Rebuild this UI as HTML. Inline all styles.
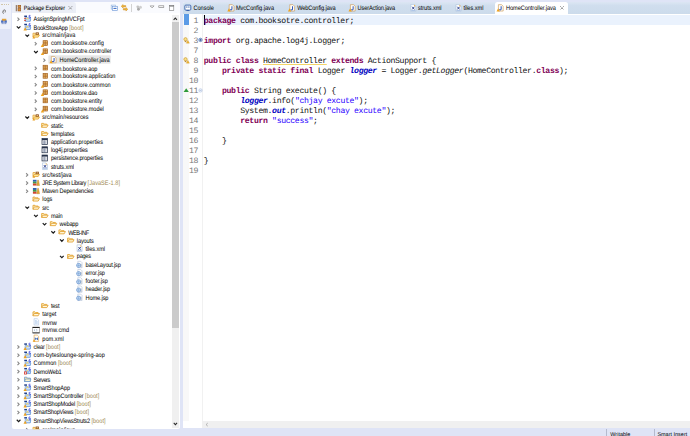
<!DOCTYPE html>
<html><head><meta charset="utf-8"><title>Eclipse</title>
<style>
html,body{margin:0;padding:0;}
body{text-rendering:geometricPrecision;width:690px;height:436px;overflow:hidden;background:#dfe4f6;position:relative;font-family:"Liberation Sans",sans-serif;font-size:5.45px;color:#1a1a1a;}
.abs{position:absolute;}
#strip{position:absolute;left:0;top:2px;width:10.8px;height:26.5px;background:#eef1fa;border-radius:0 1.5px 1.5px 0;}
#pe{position:absolute;left:12.3px;top:1.8px;width:168.2px;height:427.4px;background:#fff;border-radius:2px;overflow:hidden;}
#ed{position:absolute;left:182.7px;top:1.8px;width:520px;height:426.6px;background:#fff;border-radius:2px 0 0 0;overflow:hidden;}
#root{position:absolute;left:0;top:0;width:690px;height:436px;overflow:hidden;}
.row{position:absolute;left:0;width:172px;height:8.2px;line-height:8.2px;white-space:nowrap;}
.ic{position:absolute;width:7.3px;height:7.3px;top:0.45px;}
.ar{position:absolute;width:4.6px;height:4.6px;top:1.9px;margin-left:0.2px}
.tx{position:absolute;top:0;transform:scaleY(1.15);transform-origin:0 58%;letter-spacing:0.03px;color:#000;-webkit-text-stroke:0.02px #000;}
.selbox{position:absolute;top:0.2px;height:7.6px;width:61.2px;background:#e6e6e6;box-shadow:0 0 0 0.4px #d4d4d4;}
.sf{margin-left:1.5px;color:#a08a52;-webkit-text-stroke:0;}
.tab{position:absolute;top:4.9px;transform:scaleY(1.15);transform-origin:0 58%;line-height:8px;color:#000;white-space:nowrap;-webkit-text-stroke:0.02px #000;letter-spacing:-0.05px}
.ln{position:absolute;left:182.6px;width:15.5px;text-align:right;font-family:"Liberation Mono",monospace;font-size:8.2px;letter-spacing:-0.372px;line-height:10px;height:10px;color:#787878;}
.cd{position:absolute;left:203.8px;margin:0;font-family:"Liberation Mono",monospace;font-size:8.2px;letter-spacing:-0.361px;line-height:10px;height:10px;color:#111;white-space:pre;}
.cd b{color:#7f0055;font-weight:bold;}
.cd u{color:#2a00ff;text-decoration:none;}
.cd s{text-decoration:underline solid #f3d568;text-decoration-thickness:0.7px;text-underline-offset:0.9px;}
.cd i{font-style:italic;}
.cd i.sf2{color:#0000c0;font-weight:bold;}
</style></head><body>
<div id="root">
<div id="strip"></div>
<div id="pe"></div>
<div id="ed"></div>
<div class="abs" style="left:183.2px;top:14px;width:5.6px;height:406.8px;background:#f8f8f8;"></div>
<div class="abs" style="left:202.3px;top:14px;width:0.5px;height:406.8px;background:#f1f1f1;"></div>
<!-- editor tab bar -->
<div class="abs" style="left:182.7px;top:1.8px;width:508px;height:11.9px;background:linear-gradient(#dce6f3 0%,#d0deee 30%,#ccdbeb 100%);border-radius:2px 0 0 0;"></div>
<div class="abs" style="left:494.6px;top:2.2px;width:73.6px;height:11.6px;background:#fff;border-radius:2.5px 2.5px 0 0;"></div>

<span class="tab" id="t1" style="left:193.50px;letter-spacing:-0.033px;font-size:5.6px">Console</span>

<span class="tab" id="t3" style="left:235.90px;letter-spacing:-0.011px;font-size:5.6px">MvcConfig.java</span>

<span class="tab" id="t5" style="left:297.20px;letter-spacing:-0.078px;font-size:5.6px">WebConfig.java</span>

<span class="tab" id="t7" style="left:357.60px;letter-spacing:-0.119px;font-size:5.6px">UserAction.java</span>

<span class="tab" id="t9" style="left:418.00px;letter-spacing:-0.044px;font-size:5.6px">struts.xml</span>

<span class="tab" id="t11" style="left:463.40px;letter-spacing:-0.023px;font-size:5.6px">tiles.xml</span>

<span class="tab" id="t13" style="left:506.00px;letter-spacing:-0.047px;font-size:5.6px">HomeController.java</span>
<!-- line highlight -->
<div class="abs" style="left:203.3px;top:14.7px;width:487px;height:9.9px;background:#eaf2fd;"></div>
<div class="abs" style="left:183.9px;top:14.2px;width:5px;height:10.6px;background:#5c9be6;"></div>
<div class="abs" style="left:204.1px;top:14.6px;width:0.9px;height:10px;background:#000;"></div>
<!-- PE header -->
<div class="abs" style="left:12.3px;top:1.8px;width:168.2px;height:11.5px;background:#fafbfe;border-radius:2px 2px 0 0;"></div>
<div class="abs" style="left:12.3px;top:1.8px;width:63.6px;height:11.6px;background:#ebeef6;border-radius:2px 3px 0 0;"></div>

<span class="tab" style="left:23.7px;letter-spacing:-0.1px">Package Explorer</span>
<!-- PE scrollbar -->
<div class="abs" style="left:172.05px;top:14.9px;width:6.65px;height:413px;background:#f0f0f0;"></div>
<div class="abs" style="left:172.05px;top:22.1px;width:6.65px;height:305.6px;background:#cbcbcb;"></div>
<!-- bottom scrollbar -->
<div class="abs" style="left:202.4px;top:420.8px;width:488px;height:7.6px;background:#f0f0f0;"></div>
<!-- status -->
<div class="abs" style="left:606.4px;top:428.6px;width:0.7px;height:8px;background:#b4bace;"></div>
<div class="abs" style="left:654.3px;top:428.6px;width:0.7px;height:8px;background:#b4bace;"></div>
<span class="abs" style="left:610.3px;top:431.9px;line-height:7px;letter-spacing:0.02px;color:#000">Writable</span>
<span class="abs" style="left:657.4px;top:431.9px;line-height:7px;letter-spacing:0.02px;color:#000">Smart Insert</span>

<!-- ruler annotations -->





<!-- PE toolbar -->


<div class="abs" style="left:130.8px;top:4.2px;width:0.8px;height:7.8px;background:#d2d2d2"></div>




<!-- PE tab close-ish glyph -->


<!-- scroll arrows -->



<!-- left strip -->
<div class="abs" style="left:1px;top:4.3px;width:7.6px;height:0;border-top:0.8px dotted #d2c6aa"></div>


<div class="abs" style="left:0;top:13.5px;width:172px;height:415.7px;overflow:hidden"><div class="abs" style="left:0;top:-13.5px;width:172px;height:436px">
<div class="row" style="top:14.60px"><span class="tx" style="left:33.60px;top:1.41px;font-size:5.6px"><span class="m" id="r0" style="letter-spacing:-0.155px">AssignSpringMVCFpt</span></span></div>
<div class="row" style="top:22.80px"><span class="tx" style="left:33.60px;top:1.91px;font-size:5.6px"><span class="m" id="r1" style="letter-spacing:-0.157px">BookStoreApp</span><span class="sf">[boot]</span></span></div>
<div class="row" style="top:30.99px"><span class="tx" style="left:42.25px;top:1.41px;font-size:5.6px"><span class="m" id="r2" style="letter-spacing:0.015px">src/main/java</span></span></div>
<div class="row" style="top:39.19px"><span class="tx" style="left:50.90px;top:0.91px;font-size:5.6px"><span class="m" id="r3" style="letter-spacing:-0.014px">com.booksotre.config</span></span></div>
<div class="row" style="top:47.38px"><span class="tx" style="left:50.90px;top:0.91px;font-size:5.6px"><span class="m" id="r4" style="letter-spacing:-0.023px">com.booksotre.controller</span></span></div>
<div class="row" style="top:55.58px"><div class="selbox" style="left:48.65px"></div><span class="tx" style="left:59.55px;top:1.41px;font-size:5.6px"><span class="m" id="r5" style="letter-spacing:-0.034px">HomeController.java</span></span></div>
<div class="row" style="top:63.77px"><span class="tx" style="left:50.90px;top:1.91px;font-size:5.6px"><span class="m" id="r6" style="letter-spacing:-0.063px">com.bookstore.aop</span></span></div>
<div class="row" style="top:71.97px"><span class="tx" style="left:50.90px;top:1.41px;font-size:5.6px"><span class="m" id="r7" style="letter-spacing:-0.020px">com.bookstore.application</span></span></div>
<div class="row" style="top:80.16px"><span class="tx" style="left:50.90px;top:1.41px;font-size:5.6px"><span class="m" id="r8" style="letter-spacing:0.005px">com.bookstore.common</span></span></div>
<div class="row" style="top:88.36px"><span class="tx" style="left:50.90px;top:1.41px;font-size:5.6px"><span class="m" id="r9" style="letter-spacing:-0.063px">com.bookstore.dao</span></span></div>
<div class="row" style="top:96.55px"><span class="tx" style="left:50.90px;top:1.41px;font-size:5.6px"><span class="m" id="r10" style="letter-spacing:-0.026px">com.bookstore.entity</span></span></div>
<div class="row" style="top:104.75px"><span class="tx" style="left:50.90px;top:1.41px;font-size:5.6px"><span class="m" id="r11" style="letter-spacing:-0.031px">com.bookstore.model</span></span></div>
<div class="row" style="top:112.94px"><span class="tx" style="left:42.25px;top:1.41px;font-size:5.6px"><span class="m" id="r12" style="letter-spacing:-0.061px">src/main/resources</span></span></div>
<div class="row" style="top:121.14px"><span class="tx" style="left:50.90px;top:1.41px;font-size:5.6px"><span class="m" id="r13" style="letter-spacing:-0.127px">static</span></span></div>
<div class="row" style="top:129.33px"><span class="tx" style="left:50.90px;top:1.41px;font-size:5.6px"><span class="m" id="r14" style="letter-spacing:-0.074px">templates</span></span></div>
<div class="row" style="top:137.53px"><span class="tx" style="left:50.90px;top:1.41px;font-size:5.6px"><span class="m" id="r15" style="letter-spacing:-0.054px">application.properties</span></span></div>
<div class="row" style="top:145.72px"><span class="tx" style="left:50.90px;top:1.41px;font-size:5.6px"><span class="m" id="r16" style="letter-spacing:-0.084px">log4j.properties</span></span></div>
<div class="row" style="top:153.92px"><span class="tx" style="left:50.90px;top:1.41px;font-size:5.6px"><span class="m" id="r17" style="letter-spacing:-0.139px">persistence.properties</span></span></div>
<div class="row" style="top:162.11px"><span class="tx" style="left:50.90px;top:1.41px;font-size:5.6px"><span class="m" id="r18" style="letter-spacing:-0.094px">struts.xml</span></span></div>
<div class="row" style="top:170.31px"><span class="tx" style="left:42.25px;top:1.41px;font-size:5.6px"><span class="m" id="r19" style="letter-spacing:-0.038px">src/test/java</span></span></div>
<div class="row" style="top:178.50px"><span class="tx" style="left:42.25px;top:1.41px;font-size:5.6px"><span class="m" id="r20" style="letter-spacing:-0.310px">JRE System Library</span><span class="sf">[JavaSE-1.8]</span></span></div>
<div class="row" style="top:186.70px"><span class="tx" style="left:42.25px;top:1.41px;font-size:5.6px"><span class="m" id="r21" style="letter-spacing:-0.170px">Maven Dependencies</span></span></div>
<div class="row" style="top:194.89px"><span class="tx" style="left:42.25px;top:1.41px;font-size:5.6px"><span class="m" id="r22" style="letter-spacing:-0.079px">logs</span></span></div>
<div class="row" style="top:203.09px"><span class="tx" style="left:42.25px;top:1.91px;font-size:5.6px"><span class="m" id="r23" style="letter-spacing:-0.340px">src</span></span></div>
<div class="row" style="top:211.28px"><span class="tx" style="left:50.90px;top:1.41px;font-size:5.6px"><span class="m" id="r24" style="letter-spacing:-0.106px">main</span></span></div>
<div class="row" style="top:219.48px"><span class="tx" style="left:59.55px;top:1.41px;font-size:5.6px"><span class="m" id="r25" style="letter-spacing:-0.143px">webapp</span></span></div>
<div class="row" style="top:227.67px"><span class="tx" style="left:68.20px;top:1.91px;font-size:5.6px"><span class="m" id="r26" style="letter-spacing:-0.446px">WEB-INF</span></span></div>
<div class="row" style="top:235.87px"><span class="tx" style="left:76.85px;top:1.91px;font-size:5.6px"><span class="m" id="r27" style="letter-spacing:-0.141px">layouts</span></span></div>
<div class="row" style="top:244.06px"><span class="tx" style="left:85.50px;top:1.91px;font-size:5.6px"><span class="m" id="r28" style="letter-spacing:-0.089px">tiles.xml</span></span></div>
<div class="row" style="top:252.26px"><span class="tx" style="left:76.85px;top:0.91px;font-size:5.6px"><span class="m" id="r29" style="letter-spacing:-0.280px">pages</span></span></div>
<div class="row" style="top:260.45px"><span class="tx" style="left:85.50px;top:1.41px;font-size:5.6px"><span class="m" id="r30" style="letter-spacing:-0.181px">baseLayout.jsp</span></span></div>
<div class="row" style="top:268.65px"><span class="tx" style="left:85.50px;top:1.41px;font-size:5.6px"><span class="m" id="r31" style="letter-spacing:-0.091px">error.jsp</span></span></div>
<div class="row" style="top:276.84px"><span class="tx" style="left:85.50px;top:1.41px;font-size:5.6px"><span class="m" id="r32" style="letter-spacing:-0.040px">footer.jsp</span></span></div>
<div class="row" style="top:285.04px"><span class="tx" style="left:85.50px;top:1.41px;font-size:5.6px"><span class="m" id="r33" style="letter-spacing:-0.143px">header.jsp</span></span></div>
<div class="row" style="top:293.23px"><span class="tx" style="left:85.50px;top:1.41px;font-size:5.6px"><span class="m" id="r34" style="letter-spacing:-0.093px">Home.jsp</span></span></div>
<div class="row" style="top:301.43px"><span class="tx" style="left:50.90px;top:1.41px;font-size:5.6px"><span class="m" id="r35" style="letter-spacing:-0.133px">test</span></span></div>
<div class="row" style="top:309.62px"><span class="tx" style="left:42.25px;top:1.41px;font-size:5.6px"><span class="m" id="r36" style="letter-spacing:-0.060px">target</span></span></div>
<div class="row" style="top:317.82px"><span class="tx" style="left:42.25px;top:1.91px;font-size:5.6px"><span class="m" id="r37" style="letter-spacing:-0.015px">mvnw</span></span></div>
<div class="row" style="top:326.01px"><span class="tx" style="left:42.25px;top:1.41px;font-size:5.6px"><span class="m" id="r38" style="letter-spacing:0.079px">mvnw.cmd</span></span></div>
<div class="row" style="top:334.21px"><span class="tx" style="left:42.25px;top:1.41px;font-size:5.6px"><span class="m" id="r39" style="letter-spacing:0.044px">pom.xml</span></span></div>
<div class="row" style="top:342.40px"><span class="tx" style="left:33.60px;top:1.41px;font-size:5.6px"><span class="m" id="r40" style="letter-spacing:-0.225px">clear</span><span class="sf">[boot]</span></span></div>
<div class="row" style="top:350.60px"><span class="tx" style="left:33.60px;top:1.41px;font-size:5.6px"><span class="m" id="r41" style="letter-spacing:0.011px">com-byteslounge-spring-aop</span></span></div>
<div class="row" style="top:358.79px"><span class="tx" style="left:33.60px;top:1.41px;font-size:5.6px"><span class="m" id="r42" style="letter-spacing:0.033px">Common</span><span class="sf">[boot]</span></span></div>
<div class="row" style="top:366.99px"><span class="tx" style="left:33.60px;top:1.91px;font-size:5.6px"><span class="m" id="r43" style="letter-spacing:-0.192px">DemoWeb1</span></span></div>
<div class="row" style="top:375.18px"><span class="tx" style="left:33.60px;top:1.41px;font-size:5.6px"><span class="m" id="r44" style="letter-spacing:-0.426px">Servers</span></span></div>
<div class="row" style="top:383.38px"><span class="tx" style="left:33.60px;top:1.41px;font-size:5.6px"><span class="m" id="r45" style="letter-spacing:-0.137px">SmartShopApp</span></span></div>
<div class="row" style="top:391.57px"><span class="tx" style="left:33.60px;top:1.41px;font-size:5.6px"><span class="m" id="r46" style="letter-spacing:-0.118px">SmartShopController</span><span class="sf">[boot]</span></span></div>
<div class="row" style="top:399.77px"><span class="tx" style="left:33.60px;top:1.41px;font-size:5.6px"><span class="m" id="r47" style="letter-spacing:-0.116px">SmartShopModel</span><span class="sf">[boot]</span></span></div>
<div class="row" style="top:407.96px"><span class="tx" style="left:33.60px;top:1.41px;font-size:5.6px"><span class="m" id="r48" style="letter-spacing:-0.222px">SmartShopViews</span><span class="sf">[boot]</span></span></div>
<div class="row" style="top:416.16px"><span class="tx" style="left:33.60px;top:1.41px;font-size:5.6px"><span class="m" id="r49" style="letter-spacing:-0.202px">SmartShopViewsStruts2</span><span class="sf">[boot]</span></span></div>
<div class="row" style="top:425.15px"><span class="tx" style="left:42.25px;top:1.41px;font-size:5.6px"><span class="m" id="r50" style="letter-spacing:0.015px">src/main/java</span></span></div>
</div></div>
<div class="ln" style="top:16.90px">1</div><pre class="cd" style="top:16.90px"><b>package</b> com.booksotre.controller;</pre>
<div class="ln" style="top:26.90px">2</div><pre class="cd" style="top:26.90px"></pre>
<div class="ln" style="top:36.90px">3</div><pre class="cd" style="top:36.90px"><b>import</b> org.apache.log4j.Logger;</pre>
<div class="ln" style="top:46.90px">7</div><pre class="cd" style="top:46.90px"></pre>
<div class="ln" style="top:56.90px">8</div><pre class="cd" style="top:56.90px"><b>public</b> <b>class</b> <s>HomeController</s> <b>extends</b> ActionSupport {</pre>
<div class="ln" style="top:66.90px">9</div><pre class="cd" style="top:66.90px">    <b>private</b> <b>static</b> <b>final</b> Logger <i class="sf2">logger</i> = Logger.<i>getLogger</i>(HomeController.<b>class</b>);</pre>
<div class="ln" style="top:76.90px">10</div><pre class="cd" style="top:76.90px"></pre>
<div class="ln" style="top:86.90px">11</div><pre class="cd" style="top:86.90px">    <b>public</b> String execute() {</pre>
<div class="ln" style="top:96.90px">12</div><pre class="cd" style="top:96.90px">        <i class="sf2">logger</i>.info(<u>"chjay excute"</u>);</pre>
<div class="ln" style="top:106.90px">13</div><pre class="cd" style="top:106.90px">        System.<i class="sf2">out</i>.println(<u>"chay excute"</u>);</pre>
<div class="ln" style="top:116.90px">14</div><pre class="cd" style="top:116.90px">        <b>return</b> <u>"success"</u>;</pre>
<div class="ln" style="top:126.90px">15</div><pre class="cd" style="top:126.90px"></pre>
<div class="ln" style="top:136.90px">16</div><pre class="cd" style="top:136.90px">    }</pre>
<div class="ln" style="top:146.90px">17</div><pre class="cd" style="top:146.90px"></pre>
<div class="ln" style="top:156.90px">18</div><pre class="cd" style="top:156.90px">}</pre>
<div class="ln" style="top:166.90px">19</div><pre class="cd" style="top:166.90px"></pre>
<svg style="position:absolute;left:0;top:0;width:690px;height:436px" viewBox="0 0 690 436" width="690" height="436"><defs><clipPath id="tc"><rect x="0" y="0" width="180" height="429.2"/></clipPath></defs>
<g transform="translate(184.200 4.200) scale(0.45625 0.45625)"><rect x="1.5" y="2" width="13" height="11" rx="2" fill="#ffffff" stroke="#2f5aa8" stroke-width="2"/><rect x="4.5" y="5" width="2.5" height="2.5" fill="#2f5aa8"/><rect x="9" y="5" width="2.5" height="2.5" fill="#2f5aa8"/><rect x="5" y="13" width="6" height="2" fill="#2f5aa8"/></g>
<g transform="translate(227.600 4.200) scale(0.45625 0.45625)"><path d="M3.5 1 H10.5 L14 4.5 V15 H3.5 Z" fill="#fffdf8" stroke="#c9924a" stroke-width="1.3"/><path d="M9.5 4.5 V10.5 Q9.5 12.5 7.5 12.5 Q6 12.5 6 11" stroke="#2f55b8" stroke-width="2.2" fill="none"/><path d="M-0.6 16 L3 9 L6.6 16 Z" fill="#eea320"/></g>
<g transform="translate(288.200 4.200) scale(0.45625 0.45625)"><path d="M3.5 1 H10.5 L14 4.5 V15 H3.5 Z" fill="#fffdf8" stroke="#c9924a" stroke-width="1.3"/><path d="M9.5 4.5 V10.5 Q9.5 12.5 7.5 12.5 Q6 12.5 6 11" stroke="#2f55b8" stroke-width="2.2" fill="none"/><path d="M-0.6 16 L3 9 L6.6 16 Z" fill="#eea320"/></g>
<g transform="translate(348.800 4.200) scale(0.45625 0.45625)"><path d="M3.5 1 H10.5 L14 4.5 V15 H3.5 Z" fill="#fffdf8" stroke="#c9924a" stroke-width="1.3"/><path d="M9.5 4.5 V10.5 Q9.5 12.5 7.5 12.5 Q6 12.5 6 11" stroke="#2f55b8" stroke-width="2.2" fill="none"/><path d="M-0.6 16 L3 9 L6.6 16 Z" fill="#eea320"/></g>
<g transform="translate(409.400 4.200) scale(0.45625 0.45625)"><path d="M3 0.8 H10.5 L14 4.2 V15.4 H3 Z" fill="#fdfefe" stroke="#a9bedc" stroke-width="1.3"/><path d="M10.2 0.8 L14 4.4 H10.2 Z" fill="#f0b24a"/><path d="M6 5.6 L11 11.4 M11 5.6 L6 11.4" stroke="#2b3f8e" stroke-width="2.1"/><rect x="4" y="12.6" width="9" height="1.8" fill="#9db8e2"/></g>
<g transform="translate(454.600 4.200) scale(0.45625 0.45625)"><path d="M3 0.8 H10.5 L14 4.2 V15.4 H3 Z" fill="#fdfefe" stroke="#a9bedc" stroke-width="1.3"/><path d="M10.2 0.8 L14 4.4 H10.2 Z" fill="#f0b24a"/><path d="M6 5.6 L11 11.4 M11 5.6 L6 11.4" stroke="#2b3f8e" stroke-width="2.1"/><rect x="4" y="12.6" width="9" height="1.8" fill="#9db8e2"/></g>
<g transform="translate(496.800 4.200) scale(0.45625 0.45625)"><path d="M3.5 1 H10.5 L14 4.5 V15 H3.5 Z" fill="#fffdf8" stroke="#c9924a" stroke-width="1.3"/><path d="M9.5 4.5 V10.5 Q9.5 12.5 7.5 12.5 Q6 12.5 6 11" stroke="#2f55b8" stroke-width="2.2" fill="none"/><path d="M-0.6 16 L3 9 L6.6 16 Z" fill="#eea320"/></g>
<g transform="translate(15.800 4.900) scale(0.50000 0.50000)"><path d="M1 0.3 V12.7" stroke="#5a3414" stroke-width="1.5"/><rect x="4.4" y="0.9" width="5.4" height="4.6" fill="#d8903c" stroke="#96531a" stroke-width="1.2"/><rect x="4.4" y="7.5" width="5.4" height="4.6" fill="#d8903c" stroke="#96531a" stroke-width="1.2"/></g>
<g transform="translate(183.200 37.200) scale(0.51667 0.51667)"><circle cx="4.5" cy="4" r="3.2" fill="#f8e08a" stroke="#c9952a" stroke-width="1.2"/><rect x="3" y="7" width="3" height="2.5" fill="#b98a3a"/><path d="M6 11.5 L9 6 L12 11.5 Z" fill="#f2b632" stroke="#c58a1c" stroke-width="0.6"/></g>
<g transform="translate(183.200 57.200) scale(0.51667 0.51667)"><circle cx="4.5" cy="4" r="3.2" fill="#f8e08a" stroke="#c9952a" stroke-width="1.2"/><rect x="3" y="7" width="3" height="2.5" fill="#b98a3a"/><path d="M6 11.5 L9 6 L12 11.5 Z" fill="#f2b632" stroke="#c58a1c" stroke-width="0.6"/></g>
<g transform="translate(183.600 88.000) scale(0.52000 0.50000)"><path d="M0 8 L5 0.5 L10 8 Z" fill="#2f9a3a"/></g>
<g transform="translate(198.400 37.800) scale(0.42000 0.42000)"><circle cx="5" cy="5" r="4" fill="#e6eefc" stroke="#3a5fa8" stroke-width="1.6"/><path d="M2.5 5 H7.5 M5 2.5 V7.5" stroke="#2a478a" stroke-width="1.6"/></g>
<g transform="translate(198.400 88.300) scale(0.42000 0.42000)"><circle cx="5" cy="5" r="4" fill="#f4f8ff" stroke="#a9bcdc" stroke-width="1.4"/><path d="M2.8 5 H7.2" stroke="#8aa2cc" stroke-width="1.4"/></g>
<g transform="translate(110.800 4.700) scale(0.49333 0.49600)"><rect x="0.8" y="0.8" width="9" height="8" fill="#fff" stroke="#8fb0de" stroke-width="1.3"/><rect x="3.2" y="3.2" width="10.6" height="8.4" fill="#fff" stroke="#6f9ad8" stroke-width="1.3"/><path d="M5.4 7.4 H11.6" stroke="#2a5fc0" stroke-width="2"/></g>
<g transform="translate(120.800 4.000) scale(0.49333 0.50667)"><path d="M0.8 4.4 L4.6 1 V3 H10 V5.8 H4.6 V7.8 Z" fill="#f0b840" stroke="#cc8a1c" stroke-width="0.9"/><path d="M14.2 10.4 L10.4 7 V9 H5 V11.8 H10.4 V13.8 Z" fill="#f0b840" stroke="#cc8a1c" stroke-width="0.9"/></g>
<g transform="translate(135.800 5.000) scale(0.49231 0.50000)"><circle cx="4" cy="3.6" r="2.8" fill="#c4c4c4"/><circle cx="9.4" cy="4.6" r="3" fill="#cfcfcf"/><circle cx="5.4" cy="8.6" r="2.9" fill="#a8a8a8"/></g>
<g transform="translate(149.600 5.400) scale(0.50000 0.50000)"><path d="M1 1 H9 L5 5 Z" fill="#fff" stroke="#7a7a7a" stroke-width="1.2"/></g>
<g transform="translate(158.400 5.400) scale(0.48333 0.52000)"><rect x="0.8" y="0.8" width="10.4" height="3.4" fill="#fff" stroke="#7a7a7a" stroke-width="1.2"/></g>
<g transform="translate(169.200 5.200) scale(0.50000 0.50909)"><rect x="0.8" y="0.8" width="8.4" height="9.4" fill="#fff" stroke="#707070" stroke-width="1.1"/><rect x="0.8" y="0.8" width="8.4" height="1.8" fill="#707070"/></g>
<g transform="translate(67.600 5.200) scale(0.56000 0.56000)"><path d="M2 2 L8 8 M8 2 L2 8" stroke="#6a6a6a" stroke-width="1.5" stroke-dasharray="2.4 1.4"/></g>
<g transform="translate(559.200 5.200) scale(0.56000 0.56000)"><path d="M2 2 L8 8 M8 2 L2 8" stroke="#6a6a6a" stroke-width="1.5" stroke-dasharray="2.4 1.4"/></g>
<g transform="translate(173.100 17.100) scale(0.44000 0.45714)"><path d="M1.2 6 L5 2 L8.8 6" fill="none" stroke="#2a2a2a" stroke-width="2.3"/></g>
<g transform="translate(173.200 422.400) scale(0.44000 0.45714)"><path d="M1.2 1 L5 5 L8.8 1" fill="none" stroke="#2a2a2a" stroke-width="2.3"/></g>
<g transform="translate(205.200 422.400) scale(0.42857 0.44000)"><path d="M6 1.5 L2 5 L6 8.5" fill="none" stroke="#9a9a9a" stroke-width="1.6"/></g>
<g transform="translate(1.600 8.900) scale(0.52000 0.52000)"><path d="M4.2 8.8 Q2 8.6 2.2 6.4 L3 3.6 Q3.8 1.4 5.8 1.8 Q7.8 2.4 7.4 4.4 L6.6 7 M5.2 3.4 Q4 3.6 3.8 5" fill="none" stroke="#7c7c7c" stroke-width="1.9"/></g>
<g transform="translate(0.800 18.200) scale(0.55000 0.56364)"><rect x="2" y="1" width="8" height="4" fill="#e2a23a"/><rect x="0.5" y="4" width="4" height="4" fill="#4a6fc0"/><rect x="7" y="4" width="4" height="4" fill="#4a6fc0"/><path d="M2.5 8 V10.5 M5.8 5 V10.5 M9 8 V10.5" stroke="#3a5aa8" stroke-width="1.3"/></g>
<g transform="translate(15.900 16.800) scale(0.46000 0.46000)"><path d="M3.4 1.6 L7 5.2 L3.4 8.8" fill="none" stroke="#888888" stroke-width="2.4"/></g>
<g transform="translate(23.800 15.000) scale(0.45625 0.45625)"><rect x="1" y="1.2" width="6" height="3.2" fill="#1f3f8a"/><path d="M3 13.5 V6 H8.5 L10 4.5 H14.5 V13.5 Z" fill="#f2f7fe" stroke="#4f86cf" stroke-width="1.4" stroke-linejoin="round"/><path d="M3 13.5 L5.5 8.5 H15.5 L13.5 13.5 Z" fill="#dcebfb" stroke="#4f86cf" stroke-width="1.2" stroke-linejoin="round"/><rect x="6" y="6.2" width="4" height="3" fill="#f6d96a"/><path d="M14.5 1 Q11 0 11.2 2.2 Q11.4 3.6 13 3.8 Q14.8 4.2 14.4 5.8 Q13.8 7 11 6.4" fill="none" stroke="#3a3fe0" stroke-width="1.7"/><rect x="1" y="6" width="3.4" height="2.6" fill="#d9412b"/><rect x="1" y="10.6" width="3.4" height="2.6" fill="#d9412b"/></g>
<g transform="translate(16.300 25.000) scale(0.46000 0.46000)"><path d="M1 3 L5 7 L9 3" fill="none" stroke="#1c1c1c" stroke-width="2.6"/></g>
<g transform="translate(23.800 23.200) scale(0.45625 0.45625)"><rect x="1" y="1.2" width="6" height="3.2" fill="#1f3f8a"/><path d="M3 13.5 V6 H8.5 L10 4.5 H14.5 V13.5 Z" fill="#f2f7fe" stroke="#4f86cf" stroke-width="1.4" stroke-linejoin="round"/><path d="M3 13.5 L5.5 8.5 H15.5 L13.5 13.5 Z" fill="#dcebfb" stroke="#4f86cf" stroke-width="1.2" stroke-linejoin="round"/><rect x="6" y="6.2" width="4" height="3" fill="#f6d96a"/><path d="M14.5 1 Q11 0 11.2 2.2 Q11.4 3.6 13 3.8 Q14.8 4.2 14.4 5.8 Q13.8 7 11 6.4" fill="none" stroke="#3a3fe0" stroke-width="1.7"/><path d="M-0.6 16 L3 9 L6.6 16 Z" fill="#eea320"/></g>
<g transform="translate(24.950 33.190) scale(0.46000 0.46000)"><path d="M1 3 L5 7 L9 3" fill="none" stroke="#1c1c1c" stroke-width="2.6"/></g>
<g transform="translate(32.450 31.390) scale(0.45625 0.45625)"><path d="M1.2 12.6 V4 H5.6 L7 5.6 H12.4 V7.4" fill="#ffedb0" stroke="#dc9a2a" stroke-width="1.6" stroke-linejoin="round"/><rect x="7" y="2.2" width="7" height="5.6" fill="#8a4f1e"/><rect x="9" y="3.6" width="3" height="2.4" fill="#e9c58a"/><path d="M1.2 12.6 L3.8 8 H15.4 L12.6 12.6 Z" fill="#ffe9a0" stroke="#dc9a2a" stroke-width="1.6" stroke-linejoin="round"/><path d="M0 15.5 L3 10 L6 15.5 Z" fill="#eaa225"/></g>
<g transform="translate(33.200 41.390) scale(0.46000 0.46000)"><path d="M3.4 1.6 L7 5.2 L3.4 8.8" fill="none" stroke="#888888" stroke-width="2.4"/></g>
<g transform="translate(41.100 39.590) scale(0.45625 0.45625)"><rect x="4.4" y="2.4" width="9.4" height="10.4" fill="#f2c272" stroke="#a05c1c" stroke-width="1.5"/><path d="M4.4 5.9 H13.8 M4.4 9.3 H13.8 M9.1 2.4 V12.8" stroke="#a05c1c" stroke-width="1.3"/><path d="M-0.6 16 L3 9 L6.6 16 Z" fill="#eea320"/></g>
<g transform="translate(33.600 49.580) scale(0.46000 0.46000)"><path d="M1 3 L5 7 L9 3" fill="none" stroke="#1c1c1c" stroke-width="2.6"/></g>
<g transform="translate(41.100 47.780) scale(0.45625 0.45625)"><rect x="4.4" y="2.4" width="9.4" height="10.4" fill="#f2c272" stroke="#a05c1c" stroke-width="1.5"/><path d="M4.4 5.9 H13.8 M4.4 9.3 H13.8 M9.1 2.4 V12.8" stroke="#a05c1c" stroke-width="1.3"/><path d="M-0.6 16 L3 9 L6.6 16 Z" fill="#eea320"/></g>
<g transform="translate(41.850 57.780) scale(0.46000 0.46000)"><path d="M3.4 1.6 L7 5.2 L3.4 8.8" fill="none" stroke="#888888" stroke-width="2.4"/></g>
<g transform="translate(49.750 55.980) scale(0.45625 0.45625)"><path d="M3.5 1 H10.5 L14 4.5 V15 H3.5 Z" fill="#fffdf8" stroke="#c9924a" stroke-width="1.3"/><path d="M9.5 4.5 V10.5 Q9.5 12.5 7.5 12.5 Q6 12.5 6 11" stroke="#2f55b8" stroke-width="2.2" fill="none"/><path d="M-0.6 16 L3 9 L6.6 16 Z" fill="#eea320"/></g>
<g transform="translate(33.200 65.970) scale(0.46000 0.46000)"><path d="M3.4 1.6 L7 5.2 L3.4 8.8" fill="none" stroke="#888888" stroke-width="2.4"/></g>
<g transform="translate(41.100 64.170) scale(0.45625 0.45625)"><rect x="4.4" y="2.4" width="9.4" height="10.4" fill="#f2c272" stroke="#a05c1c" stroke-width="1.5"/><path d="M4.4 5.9 H13.8 M4.4 9.3 H13.8 M9.1 2.4 V12.8" stroke="#a05c1c" stroke-width="1.3"/></g>
<g transform="translate(33.200 74.170) scale(0.46000 0.46000)"><path d="M3.4 1.6 L7 5.2 L3.4 8.8" fill="none" stroke="#888888" stroke-width="2.4"/></g>
<g transform="translate(41.100 72.370) scale(0.45625 0.45625)"><rect x="4.4" y="2.4" width="9.4" height="10.4" fill="#f2c272" stroke="#a05c1c" stroke-width="1.5"/><path d="M4.4 5.9 H13.8 M4.4 9.3 H13.8 M9.1 2.4 V12.8" stroke="#a05c1c" stroke-width="1.3"/></g>
<g transform="translate(33.200 82.360) scale(0.46000 0.46000)"><path d="M3.4 1.6 L7 5.2 L3.4 8.8" fill="none" stroke="#888888" stroke-width="2.4"/></g>
<g transform="translate(41.100 80.560) scale(0.45625 0.45625)"><rect x="4.4" y="2.4" width="9.4" height="10.4" fill="#f2c272" stroke="#a05c1c" stroke-width="1.5"/><path d="M4.4 5.9 H13.8 M4.4 9.3 H13.8 M9.1 2.4 V12.8" stroke="#a05c1c" stroke-width="1.3"/><path d="M-0.6 16 L3 9 L6.6 16 Z" fill="#eea320"/></g>
<g transform="translate(33.200 90.560) scale(0.46000 0.46000)"><path d="M3.4 1.6 L7 5.2 L3.4 8.8" fill="none" stroke="#888888" stroke-width="2.4"/></g>
<g transform="translate(41.100 88.760) scale(0.45625 0.45625)"><rect x="4.4" y="2.4" width="9.4" height="10.4" fill="#f2c272" stroke="#a05c1c" stroke-width="1.5"/><path d="M4.4 5.9 H13.8 M4.4 9.3 H13.8 M9.1 2.4 V12.8" stroke="#a05c1c" stroke-width="1.3"/><path d="M-0.6 16 L3 9 L6.6 16 Z" fill="#eea320"/></g>
<g transform="translate(33.200 98.750) scale(0.46000 0.46000)"><path d="M3.4 1.6 L7 5.2 L3.4 8.8" fill="none" stroke="#888888" stroke-width="2.4"/></g>
<g transform="translate(41.100 96.950) scale(0.45625 0.45625)"><rect x="4.4" y="2.4" width="9.4" height="10.4" fill="#f2c272" stroke="#a05c1c" stroke-width="1.5"/><path d="M4.4 5.9 H13.8 M4.4 9.3 H13.8 M9.1 2.4 V12.8" stroke="#a05c1c" stroke-width="1.3"/></g>
<g transform="translate(33.200 106.950) scale(0.46000 0.46000)"><path d="M3.4 1.6 L7 5.2 L3.4 8.8" fill="none" stroke="#888888" stroke-width="2.4"/></g>
<g transform="translate(41.100 105.150) scale(0.45625 0.45625)"><rect x="4.4" y="2.4" width="9.4" height="10.4" fill="#f2c272" stroke="#a05c1c" stroke-width="1.5"/><path d="M4.4 5.9 H13.8 M4.4 9.3 H13.8 M9.1 2.4 V12.8" stroke="#a05c1c" stroke-width="1.3"/><path d="M-0.6 16 L3 9 L6.6 16 Z" fill="#eea320"/></g>
<g transform="translate(24.950 115.140) scale(0.46000 0.46000)"><path d="M1 3 L5 7 L9 3" fill="none" stroke="#1c1c1c" stroke-width="2.6"/></g>
<g transform="translate(32.450 113.340) scale(0.45625 0.45625)"><path d="M1.2 12.6 V4 H5.6 L7 5.6 H12.4 V7.4" fill="#ffedb0" stroke="#dc9a2a" stroke-width="1.6" stroke-linejoin="round"/><rect x="7" y="2.2" width="7" height="5.6" fill="#8a4f1e"/><rect x="9" y="3.6" width="3" height="2.4" fill="#e9c58a"/><path d="M1.2 12.6 L3.8 8 H15.4 L12.6 12.6 Z" fill="#ffe9a0" stroke="#dc9a2a" stroke-width="1.6" stroke-linejoin="round"/><path d="M0 15.5 L3 10 L6 15.5 Z" fill="#eaa225"/></g>
<g transform="translate(41.100 121.540) scale(0.45625 0.45625)"><path d="M1.2 12.6 V4 H5.6 L7 5.6 H12.4 V7.4" fill="#fff3c4" stroke="#e09c28" stroke-width="1.8" stroke-linejoin="round"/><path d="M1.2 12.6 L3.8 7.6 H15.4 L12.6 12.6 Z" fill="#fff8dc" stroke="#e09c28" stroke-width="1.8" stroke-linejoin="round"/></g>
<g transform="translate(41.100 129.730) scale(0.45625 0.45625)"><path d="M1.2 12.6 V4 H5.6 L7 5.6 H12.4 V7.4" fill="#fff3c4" stroke="#e09c28" stroke-width="1.8" stroke-linejoin="round"/><path d="M1.2 12.6 L3.8 7.6 H15.4 L12.6 12.6 Z" fill="#fff8dc" stroke="#e09c28" stroke-width="1.8" stroke-linejoin="round"/></g>
<g transform="translate(41.100 137.930) scale(0.45625 0.45625)"><rect x="2" y="1.5" width="12" height="13" fill="#ffffff" stroke="#26324a" stroke-width="1.6"/><rect x="2" y="1.5" width="12" height="3.5" fill="#26324a"/><path d="M4 7.5 H12 M4 10 H12 M4 12.5 H12 M7 5 V14" stroke="#5a6a8a" stroke-width="1"/></g>
<g transform="translate(41.100 146.120) scale(0.45625 0.45625)"><rect x="2" y="1.5" width="12" height="13" fill="#ffffff" stroke="#26324a" stroke-width="1.6"/><rect x="2" y="1.5" width="12" height="3.5" fill="#26324a"/><path d="M4 7.5 H12 M4 10 H12 M4 12.5 H12 M7 5 V14" stroke="#5a6a8a" stroke-width="1"/></g>
<g transform="translate(41.100 154.320) scale(0.45625 0.45625)"><rect x="2" y="1.5" width="12" height="13" fill="#ffffff" stroke="#26324a" stroke-width="1.6"/><rect x="2" y="1.5" width="12" height="3.5" fill="#26324a"/><path d="M4 7.5 H12 M4 10 H12 M4 12.5 H12 M7 5 V14" stroke="#5a6a8a" stroke-width="1"/></g>
<g transform="translate(41.100 162.510) scale(0.45625 0.45625)"><path d="M3 0.8 H10.5 L14 4.2 V15.4 H3 Z" fill="#fdfefe" stroke="#a9bedc" stroke-width="1.3"/><path d="M10.2 0.8 L14 4.4 H10.2 Z" fill="#f0b24a"/><path d="M6 5.6 L11 11.4 M11 5.6 L6 11.4" stroke="#2b3f8e" stroke-width="2.1"/><rect x="4" y="12.6" width="9" height="1.8" fill="#9db8e2"/></g>
<g transform="translate(24.550 172.510) scale(0.46000 0.46000)"><path d="M3.4 1.6 L7 5.2 L3.4 8.8" fill="none" stroke="#888888" stroke-width="2.4"/></g>
<g transform="translate(32.450 170.710) scale(0.45625 0.45625)"><path d="M1.2 12.6 V4 H5.6 L7 5.6 H12.4 V7.4" fill="#ffedb0" stroke="#dc9a2a" stroke-width="1.6" stroke-linejoin="round"/><rect x="7" y="2.2" width="7" height="5.6" fill="#8a4f1e"/><rect x="9" y="3.6" width="3" height="2.4" fill="#e9c58a"/><path d="M1.2 12.6 L3.8 8 H15.4 L12.6 12.6 Z" fill="#ffe9a0" stroke="#dc9a2a" stroke-width="1.6" stroke-linejoin="round"/><path d="M0 15.5 L3 10 L6 15.5 Z" fill="#eaa225"/></g>
<g transform="translate(24.550 180.700) scale(0.46000 0.46000)"><path d="M3.4 1.6 L7 5.2 L3.4 8.8" fill="none" stroke="#888888" stroke-width="2.4"/></g>
<g transform="translate(32.450 178.900) scale(0.45625 0.45625)"><rect x="1" y="2" width="8" height="4.2" fill="#2f5fb0"/><rect x="1" y="6.2" width="8" height="4" fill="#3f9a4a"/><rect x="1" y="10.2" width="8" height="4.3" fill="#d2452e"/><path d="M9.5 14.5 L11.5 2.5 L13.2 2.8 L15.5 14.5 Z" fill="#e6a832" stroke="#a8741c" stroke-width="0.8"/></g>
<g transform="translate(24.550 188.900) scale(0.46000 0.46000)"><path d="M3.4 1.6 L7 5.2 L3.4 8.8" fill="none" stroke="#888888" stroke-width="2.4"/></g>
<g transform="translate(32.450 187.100) scale(0.45625 0.45625)"><rect x="1" y="2" width="8" height="4.2" fill="#2f5fb0"/><rect x="1" y="6.2" width="8" height="4" fill="#3f9a4a"/><rect x="1" y="10.2" width="8" height="4.3" fill="#d2452e"/><path d="M9.5 14.5 L11.5 2.5 L13.2 2.8 L15.5 14.5 Z" fill="#e6a832" stroke="#a8741c" stroke-width="0.8"/></g>
<g transform="translate(32.450 195.290) scale(0.45625 0.45625)"><path d="M1.2 12.6 V4 H5.6 L7 5.6 H12.4 V7.4" fill="#fff3c4" stroke="#e09c28" stroke-width="1.8" stroke-linejoin="round"/><path d="M1.2 12.6 L3.8 7.6 H15.4 L12.6 12.6 Z" fill="#fff8dc" stroke="#e09c28" stroke-width="1.8" stroke-linejoin="round"/></g>
<g transform="translate(24.950 205.290) scale(0.46000 0.46000)"><path d="M1 3 L5 7 L9 3" fill="none" stroke="#1c1c1c" stroke-width="2.6"/></g>
<g transform="translate(32.450 203.490) scale(0.45625 0.45625)"><path d="M1.2 12.6 V4 H5.6 L7 5.6 H12.4 V7.4" fill="#fff3c4" stroke="#e09c28" stroke-width="1.8" stroke-linejoin="round"/><path d="M1.2 12.6 L3.8 7.6 H15.4 L12.6 12.6 Z" fill="#fff8dc" stroke="#e09c28" stroke-width="1.8" stroke-linejoin="round"/></g>
<g transform="translate(33.600 213.480) scale(0.46000 0.46000)"><path d="M1 3 L5 7 L9 3" fill="none" stroke="#1c1c1c" stroke-width="2.6"/></g>
<g transform="translate(41.100 211.680) scale(0.45625 0.45625)"><path d="M1.2 12.6 V4 H5.6 L7 5.6 H12.4 V7.4" fill="#fff3c4" stroke="#e09c28" stroke-width="1.8" stroke-linejoin="round"/><path d="M1.2 12.6 L3.8 7.6 H15.4 L12.6 12.6 Z" fill="#fff8dc" stroke="#e09c28" stroke-width="1.8" stroke-linejoin="round"/></g>
<g transform="translate(42.250 221.680) scale(0.46000 0.46000)"><path d="M1 3 L5 7 L9 3" fill="none" stroke="#1c1c1c" stroke-width="2.6"/></g>
<g transform="translate(49.750 219.880) scale(0.45625 0.45625)"><path d="M1.2 12.6 V4 H5.6 L7 5.6 H12.4 V7.4" fill="#fff3c4" stroke="#e09c28" stroke-width="1.8" stroke-linejoin="round"/><path d="M1.2 12.6 L3.8 7.6 H15.4 L12.6 12.6 Z" fill="#fff8dc" stroke="#e09c28" stroke-width="1.8" stroke-linejoin="round"/></g>
<g transform="translate(50.900 229.870) scale(0.46000 0.46000)"><path d="M1 3 L5 7 L9 3" fill="none" stroke="#1c1c1c" stroke-width="2.6"/></g>
<g transform="translate(58.400 228.070) scale(0.45625 0.45625)"><path d="M1.2 12.6 V4 H5.6 L7 5.6 H12.4 V7.4" fill="#fff3c4" stroke="#e09c28" stroke-width="1.8" stroke-linejoin="round"/><path d="M1.2 12.6 L3.8 7.6 H15.4 L12.6 12.6 Z" fill="#fff8dc" stroke="#e09c28" stroke-width="1.8" stroke-linejoin="round"/></g>
<g transform="translate(59.550 238.070) scale(0.46000 0.46000)"><path d="M1 3 L5 7 L9 3" fill="none" stroke="#1c1c1c" stroke-width="2.6"/></g>
<g transform="translate(67.050 236.270) scale(0.45625 0.45625)"><path d="M1.2 12.6 V4 H5.6 L7 5.6 H12.4 V7.4" fill="#fff3c4" stroke="#e09c28" stroke-width="1.8" stroke-linejoin="round"/><path d="M1.2 12.6 L3.8 7.6 H15.4 L12.6 12.6 Z" fill="#fff8dc" stroke="#e09c28" stroke-width="1.8" stroke-linejoin="round"/></g>
<g transform="translate(75.700 244.460) scale(0.45625 0.45625)"><path d="M3 0.8 H10.5 L14 4.2 V15.4 H3 Z" fill="#fdfefe" stroke="#a9bedc" stroke-width="1.3"/><path d="M10.2 0.8 L14 4.4 H10.2 Z" fill="#f0b24a"/><path d="M6 5.6 L11 11.4 M11 5.6 L6 11.4" stroke="#2b3f8e" stroke-width="2.1"/><rect x="4" y="12.6" width="9" height="1.8" fill="#9db8e2"/></g>
<g transform="translate(59.550 254.460) scale(0.46000 0.46000)"><path d="M1 3 L5 7 L9 3" fill="none" stroke="#1c1c1c" stroke-width="2.6"/></g>
<g transform="translate(67.050 252.660) scale(0.45625 0.45625)"><path d="M1.2 12.6 V4 H5.6 L7 5.6 H12.4 V7.4" fill="#fff3c4" stroke="#e09c28" stroke-width="1.8" stroke-linejoin="round"/><path d="M1.2 12.6 L3.8 7.6 H15.4 L12.6 12.6 Z" fill="#fff8dc" stroke="#e09c28" stroke-width="1.8" stroke-linejoin="round"/></g>
<g transform="translate(75.700 260.850) scale(0.45625 0.45625)"><path d="M4.5 1 H11 L14 4 V15 H4.5 Z" fill="#fdfefe" stroke="#a9b9d2" stroke-width="1.1"/><circle cx="6.5" cy="10" r="4.6" fill="#cfe2f6" stroke="#5b8ccb" stroke-width="1.3"/><path d="M2 10 H11 M6.5 5.5 V14.5" stroke="#5b8ccb" stroke-width="0.9"/><path d="M11 8 H13 M11.5 10.5 H13 M11 13 H13" stroke="#8a8a8a" stroke-width="1"/></g>
<g transform="translate(75.700 269.050) scale(0.45625 0.45625)"><path d="M4.5 1 H11 L14 4 V15 H4.5 Z" fill="#fdfefe" stroke="#a9b9d2" stroke-width="1.1"/><circle cx="6.5" cy="10" r="4.6" fill="#cfe2f6" stroke="#5b8ccb" stroke-width="1.3"/><path d="M2 10 H11 M6.5 5.5 V14.5" stroke="#5b8ccb" stroke-width="0.9"/><path d="M11 8 H13 M11.5 10.5 H13 M11 13 H13" stroke="#8a8a8a" stroke-width="1"/></g>
<g transform="translate(75.700 277.240) scale(0.45625 0.45625)"><path d="M4.5 1 H11 L14 4 V15 H4.5 Z" fill="#fdfefe" stroke="#a9b9d2" stroke-width="1.1"/><circle cx="6.5" cy="10" r="4.6" fill="#cfe2f6" stroke="#5b8ccb" stroke-width="1.3"/><path d="M2 10 H11 M6.5 5.5 V14.5" stroke="#5b8ccb" stroke-width="0.9"/><path d="M11 8 H13 M11.5 10.5 H13 M11 13 H13" stroke="#8a8a8a" stroke-width="1"/></g>
<g transform="translate(75.700 285.440) scale(0.45625 0.45625)"><path d="M4.5 1 H11 L14 4 V15 H4.5 Z" fill="#fdfefe" stroke="#a9b9d2" stroke-width="1.1"/><circle cx="6.5" cy="10" r="4.6" fill="#cfe2f6" stroke="#5b8ccb" stroke-width="1.3"/><path d="M2 10 H11 M6.5 5.5 V14.5" stroke="#5b8ccb" stroke-width="0.9"/><path d="M11 8 H13 M11.5 10.5 H13 M11 13 H13" stroke="#8a8a8a" stroke-width="1"/></g>
<g transform="translate(75.700 293.630) scale(0.45625 0.45625)"><path d="M4.5 1 H11 L14 4 V15 H4.5 Z" fill="#fdfefe" stroke="#a9b9d2" stroke-width="1.1"/><circle cx="6.5" cy="10" r="4.6" fill="#cfe2f6" stroke="#5b8ccb" stroke-width="1.3"/><path d="M2 10 H11 M6.5 5.5 V14.5" stroke="#5b8ccb" stroke-width="0.9"/><path d="M11 8 H13 M11.5 10.5 H13 M11 13 H13" stroke="#8a8a8a" stroke-width="1"/></g>
<g transform="translate(41.100 301.830) scale(0.45625 0.45625)"><path d="M1.2 12.6 V4 H5.6 L7 5.6 H12.4 V7.4" fill="#fff3c4" stroke="#e09c28" stroke-width="1.8" stroke-linejoin="round"/><path d="M1.2 12.6 L3.8 7.6 H15.4 L12.6 12.6 Z" fill="#fff8dc" stroke="#e09c28" stroke-width="1.8" stroke-linejoin="round"/></g>
<g transform="translate(32.450 310.020) scale(0.45625 0.45625)"><path d="M1.2 12.6 V4 H5.6 L7 5.6 H12.4 V7.4" fill="#fff3c4" stroke="#e09c28" stroke-width="1.8" stroke-linejoin="round"/><path d="M1.2 12.6 L3.8 7.6 H15.4 L12.6 12.6 Z" fill="#fff8dc" stroke="#e09c28" stroke-width="1.8" stroke-linejoin="round"/></g>
<g transform="translate(32.450 318.220) scale(0.45625 0.45625)"><path d="M3.5 1 H10.5 L13.5 4 V15 H3.5 Z" fill="#fbfdff" stroke="#a9c0e2" stroke-width="1.2"/><path d="M5.5 5 H9.5 M5.5 7.3 H11.5 M5.5 9.6 H11.5 M5.5 11.9 H11.5" stroke="#a6c0e6" stroke-width="1.2"/></g>
<g transform="translate(32.450 326.410) scale(0.45625 0.45625)"><rect x="0.8" y="1.8" width="14.4" height="12.4" fill="#ffffff" stroke="#4a4a4a" stroke-width="0.9"/><rect x="0.3" y="1" width="15.4" height="2.4" fill="#1a1a1a"/><rect x="0.3" y="13.4" width="15.4" height="1.8" fill="#1a1a1a"/><path d="M6 6 L3.5 8.3 L6 10.6 M8 6 L10.5 8.3 L8 10.6" stroke="#7f9fca" stroke-width="1.2" fill="none"/></g>
<g transform="translate(32.450 334.610) scale(0.45625 0.45625)"><path d="M3.5 1 H10.5 L13.5 4 V15 H3.5 Z" fill="#fffdf6" stroke="#e0a040" stroke-width="1.3"/><path d="M6 12 V7 L8.6 10 L11.2 7 V12" stroke="#2f5fb8" stroke-width="1.9" fill="none"/><path d="M0.5 15.5 L3.5 9.5 L6.5 15.5 Z" fill="#eaa225"/></g>
<g transform="translate(15.900 344.600) scale(0.46000 0.46000)"><path d="M3.4 1.6 L7 5.2 L3.4 8.8" fill="none" stroke="#888888" stroke-width="2.4"/></g>
<g transform="translate(23.800 342.800) scale(0.45625 0.45625)"><rect x="1" y="1.2" width="6" height="3.2" fill="#1f3f8a"/><path d="M3 13.5 V6 H8.5 L10 4.5 H14.5 V13.5 Z" fill="#f2f7fe" stroke="#4f86cf" stroke-width="1.4" stroke-linejoin="round"/><path d="M3 13.5 L5.5 8.5 H15.5 L13.5 13.5 Z" fill="#dcebfb" stroke="#4f86cf" stroke-width="1.2" stroke-linejoin="round"/><rect x="6" y="6.2" width="4" height="3" fill="#f6d96a"/><path d="M14.5 1 Q11 0 11.2 2.2 Q11.4 3.6 13 3.8 Q14.8 4.2 14.4 5.8 Q13.8 7 11 6.4" fill="none" stroke="#3a3fe0" stroke-width="1.7"/><path d="M-0.6 16 L3 9 L6.6 16 Z" fill="#eea320"/></g>
<g transform="translate(15.900 352.800) scale(0.46000 0.46000)"><path d="M3.4 1.6 L7 5.2 L3.4 8.8" fill="none" stroke="#888888" stroke-width="2.4"/></g>
<g transform="translate(23.800 351.000) scale(0.45625 0.45625)"><rect x="1" y="1.2" width="6" height="3.2" fill="#1f3f8a"/><path d="M3 13.5 V6 H8.5 L10 4.5 H14.5 V13.5 Z" fill="#f2f7fe" stroke="#4f86cf" stroke-width="1.4" stroke-linejoin="round"/><path d="M3 13.5 L5.5 8.5 H15.5 L13.5 13.5 Z" fill="#dcebfb" stroke="#4f86cf" stroke-width="1.2" stroke-linejoin="round"/><rect x="6" y="6.2" width="4" height="3" fill="#f6d96a"/><path d="M14.5 1 Q11 0 11.2 2.2 Q11.4 3.6 13 3.8 Q14.8 4.2 14.4 5.8 Q13.8 7 11 6.4" fill="none" stroke="#3a3fe0" stroke-width="1.7"/><path d="M-0.6 16 L3 9 L6.6 16 Z" fill="#eea320"/></g>
<g transform="translate(15.900 360.990) scale(0.46000 0.46000)"><path d="M3.4 1.6 L7 5.2 L3.4 8.8" fill="none" stroke="#888888" stroke-width="2.4"/></g>
<g transform="translate(23.800 359.190) scale(0.45625 0.45625)"><rect x="1" y="1.2" width="6" height="3.2" fill="#1f3f8a"/><path d="M3 13.5 V6 H8.5 L10 4.5 H14.5 V13.5 Z" fill="#f2f7fe" stroke="#4f86cf" stroke-width="1.4" stroke-linejoin="round"/><path d="M3 13.5 L5.5 8.5 H15.5 L13.5 13.5 Z" fill="#dcebfb" stroke="#4f86cf" stroke-width="1.2" stroke-linejoin="round"/><rect x="6" y="6.2" width="4" height="3" fill="#f6d96a"/><path d="M14.5 1 Q11 0 11.2 2.2 Q11.4 3.6 13 3.8 Q14.8 4.2 14.4 5.8 Q13.8 7 11 6.4" fill="none" stroke="#3a3fe0" stroke-width="1.7"/><path d="M-0.6 16 L3 9 L6.6 16 Z" fill="#eea320"/></g>
<g transform="translate(15.900 369.190) scale(0.46000 0.46000)"><path d="M3.4 1.6 L7 5.2 L3.4 8.8" fill="none" stroke="#888888" stroke-width="2.4"/></g>
<g transform="translate(23.800 367.390) scale(0.45625 0.45625)"><rect x="1" y="1.2" width="6" height="3.2" fill="#1f3f8a"/><path d="M3 13.5 V6 H8.5 L10 4.5 H14.5 V13.5 Z" fill="#f2f7fe" stroke="#4f86cf" stroke-width="1.4" stroke-linejoin="round"/><path d="M3 13.5 L5.5 8.5 H15.5 L13.5 13.5 Z" fill="#dcebfb" stroke="#4f86cf" stroke-width="1.2" stroke-linejoin="round"/><rect x="6" y="6.2" width="4" height="3" fill="#f6d96a"/><path d="M14.5 1 Q11 0 11.2 2.2 Q11.4 3.6 13 3.8 Q14.8 4.2 14.4 5.8 Q13.8 7 11 6.4" fill="none" stroke="#3a3fe0" stroke-width="1.7"/><rect x="0.5" y="9" width="6" height="6.5" fill="#d8362a"/><rect x="2.2" y="10.8" width="2.6" height="3" fill="#fff"/><circle cx="9.5" cy="10" r="2.6" fill="#8fc0ee"/></g>
<g transform="translate(15.900 377.380) scale(0.46000 0.46000)"><path d="M3.4 1.6 L7 5.2 L3.4 8.8" fill="none" stroke="#888888" stroke-width="2.4"/></g>
<g transform="translate(23.800 375.580) scale(0.45625 0.45625)"><path d="M1.5 13 V3.5 H6.5 L8 5.5 H14.5 V13 Z" fill="#fbe9a6" stroke="#4f86cf" stroke-width="1.4" stroke-linejoin="round"/><path d="M1.5 13 L4 7.5 H15.5 L13.5 13 Z" fill="#fdf3c8" stroke="#4f86cf" stroke-width="1.3" stroke-linejoin="round"/></g>
<g transform="translate(15.900 385.580) scale(0.46000 0.46000)"><path d="M3.4 1.6 L7 5.2 L3.4 8.8" fill="none" stroke="#888888" stroke-width="2.4"/></g>
<g transform="translate(23.800 383.780) scale(0.45625 0.45625)"><rect x="1" y="1.2" width="6" height="3.2" fill="#1f3f8a"/><path d="M3 13.5 V6 H8.5 L10 4.5 H14.5 V13.5 Z" fill="#f2f7fe" stroke="#4f86cf" stroke-width="1.4" stroke-linejoin="round"/><path d="M3 13.5 L5.5 8.5 H15.5 L13.5 13.5 Z" fill="#dcebfb" stroke="#4f86cf" stroke-width="1.2" stroke-linejoin="round"/><rect x="6" y="6.2" width="4" height="3" fill="#f6d96a"/><path d="M14.5 1 Q11 0 11.2 2.2 Q11.4 3.6 13 3.8 Q14.8 4.2 14.4 5.8 Q13.8 7 11 6.4" fill="none" stroke="#3a3fe0" stroke-width="1.7"/><path d="M-0.6 16 L3 9 L6.6 16 Z" fill="#eea320"/></g>
<g transform="translate(15.900 393.770) scale(0.46000 0.46000)"><path d="M3.4 1.6 L7 5.2 L3.4 8.8" fill="none" stroke="#888888" stroke-width="2.4"/></g>
<g transform="translate(23.800 391.970) scale(0.45625 0.45625)"><rect x="1" y="1.2" width="6" height="3.2" fill="#1f3f8a"/><path d="M3 13.5 V6 H8.5 L10 4.5 H14.5 V13.5 Z" fill="#f2f7fe" stroke="#4f86cf" stroke-width="1.4" stroke-linejoin="round"/><path d="M3 13.5 L5.5 8.5 H15.5 L13.5 13.5 Z" fill="#dcebfb" stroke="#4f86cf" stroke-width="1.2" stroke-linejoin="round"/><rect x="6" y="6.2" width="4" height="3" fill="#f6d96a"/><path d="M14.5 1 Q11 0 11.2 2.2 Q11.4 3.6 13 3.8 Q14.8 4.2 14.4 5.8 Q13.8 7 11 6.4" fill="none" stroke="#3a3fe0" stroke-width="1.7"/><path d="M-0.6 16 L3 9 L6.6 16 Z" fill="#eea320"/></g>
<g transform="translate(15.900 401.970) scale(0.46000 0.46000)"><path d="M3.4 1.6 L7 5.2 L3.4 8.8" fill="none" stroke="#888888" stroke-width="2.4"/></g>
<g transform="translate(23.800 400.170) scale(0.45625 0.45625)"><rect x="1" y="1.2" width="6" height="3.2" fill="#1f3f8a"/><path d="M3 13.5 V6 H8.5 L10 4.5 H14.5 V13.5 Z" fill="#f2f7fe" stroke="#4f86cf" stroke-width="1.4" stroke-linejoin="round"/><path d="M3 13.5 L5.5 8.5 H15.5 L13.5 13.5 Z" fill="#dcebfb" stroke="#4f86cf" stroke-width="1.2" stroke-linejoin="round"/><rect x="6" y="6.2" width="4" height="3" fill="#f6d96a"/><path d="M14.5 1 Q11 0 11.2 2.2 Q11.4 3.6 13 3.8 Q14.8 4.2 14.4 5.8 Q13.8 7 11 6.4" fill="none" stroke="#3a3fe0" stroke-width="1.7"/><path d="M-0.6 16 L3 9 L6.6 16 Z" fill="#eea320"/></g>
<g transform="translate(15.900 410.160) scale(0.46000 0.46000)"><path d="M3.4 1.6 L7 5.2 L3.4 8.8" fill="none" stroke="#888888" stroke-width="2.4"/></g>
<g transform="translate(23.800 408.360) scale(0.45625 0.45625)"><rect x="1" y="1.2" width="6" height="3.2" fill="#1f3f8a"/><path d="M3 13.5 V6 H8.5 L10 4.5 H14.5 V13.5 Z" fill="#f2f7fe" stroke="#4f86cf" stroke-width="1.4" stroke-linejoin="round"/><path d="M3 13.5 L5.5 8.5 H15.5 L13.5 13.5 Z" fill="#dcebfb" stroke="#4f86cf" stroke-width="1.2" stroke-linejoin="round"/><rect x="6" y="6.2" width="4" height="3" fill="#f6d96a"/><path d="M14.5 1 Q11 0 11.2 2.2 Q11.4 3.6 13 3.8 Q14.8 4.2 14.4 5.8 Q13.8 7 11 6.4" fill="none" stroke="#3a3fe0" stroke-width="1.7"/><path d="M-0.6 16 L3 9 L6.6 16 Z" fill="#eea320"/></g>
<g clip-path="url(#tc)"><g transform="translate(16.300 418.360) scale(0.46000 0.46000)"><path d="M1 3 L5 7 L9 3" fill="none" stroke="#1c1c1c" stroke-width="2.6"/></g></g>
<g clip-path="url(#tc)"><g transform="translate(23.800 416.560) scale(0.45625 0.45625)"><rect x="1" y="1.2" width="6" height="3.2" fill="#1f3f8a"/><path d="M3 13.5 V6 H8.5 L10 4.5 H14.5 V13.5 Z" fill="#f2f7fe" stroke="#4f86cf" stroke-width="1.4" stroke-linejoin="round"/><path d="M3 13.5 L5.5 8.5 H15.5 L13.5 13.5 Z" fill="#dcebfb" stroke="#4f86cf" stroke-width="1.2" stroke-linejoin="round"/><rect x="6" y="6.2" width="4" height="3" fill="#f6d96a"/><path d="M14.5 1 Q11 0 11.2 2.2 Q11.4 3.6 13 3.8 Q14.8 4.2 14.4 5.8 Q13.8 7 11 6.4" fill="none" stroke="#3a3fe0" stroke-width="1.7"/><path d="M-0.6 16 L3 9 L6.6 16 Z" fill="#eea320"/></g></g>
<g clip-path="url(#tc)"><g transform="translate(24.550 427.350) scale(0.46000 0.46000)"><path d="M3.4 1.6 L7 5.2 L3.4 8.8" fill="none" stroke="#888888" stroke-width="2.4"/></g></g>
<g clip-path="url(#tc)"><g transform="translate(32.450 425.550) scale(0.45625 0.45625)"><path d="M1.2 12.6 V4 H5.6 L7 5.6 H12.4 V7.4" fill="#ffedb0" stroke="#dc9a2a" stroke-width="1.6" stroke-linejoin="round"/><rect x="7" y="2.2" width="7" height="5.6" fill="#8a4f1e"/><rect x="9" y="3.6" width="3" height="2.4" fill="#e9c58a"/><path d="M1.2 12.6 L3.8 8 H15.4 L12.6 12.6 Z" fill="#ffe9a0" stroke="#dc9a2a" stroke-width="1.6" stroke-linejoin="round"/><path d="M0 15.5 L3 10 L6 15.5 Z" fill="#eaa225"/></g></g>
</svg>
</div>
</body></html>
